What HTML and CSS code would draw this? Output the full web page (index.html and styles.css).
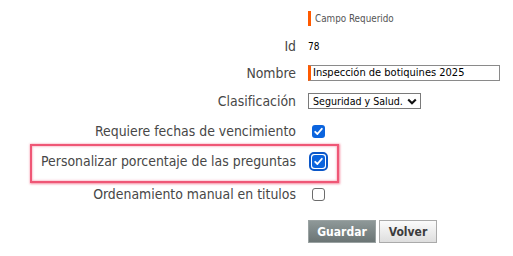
FILE: index.html
```html
<!DOCTYPE html>
<html lang="es">
<head>
<meta charset="utf-8">
<link rel="stylesheet" href="styles.css">
</head>
<body>
<div class="form">
  <div class="row r1">
    <div class="label"></div>
    <div class="value"><span class="required-note">Campo Requerido</span></div>
  </div>
  <div class="row r2">
    <div class="label">Id</div>
    <div class="value"><span class="id-val">78</span></div>
  </div>
  <div class="row r3">
    <div class="label">Nombre</div>
    <div class="value"><div class="text-input">Inspección de botiquines 2025</div></div>
  </div>
  <div class="row r4">
    <div class="label">Clasificación</div>
    <div class="value">
      <div class="select"><span>Seguridad y Salud.</span>
        <svg class="chev" width="10" height="7" viewBox="0 0 10 7"><path d="M1.2 1.4 L5 5.2 L8.8 1.4" fill="none" stroke="#111" stroke-width="2.1"/></svg>
      </div>
    </div>
  </div>
  <div class="row r5">
    <div class="label">Requiere fechas de vencimiento</div>
    <div class="value">
      <span class="check on"><svg width="13" height="13" viewBox="0 0 13 13"><path d="M3.2 6.8 L5.4 9 L9.8 3.8" fill="none" stroke="#fff" stroke-width="1.8" stroke-linecap="round" stroke-linejoin="round"/></svg></span>
    </div>
  </div>
  <div class="row r6 highlight">
    <div class="label">Personalizar porcentaje de las preguntas</div>
    <div class="value">
      <span class="focus-ring"><span class="check on"><svg width="13" height="13" viewBox="0 0 13 13"><path d="M3.2 6.8 L5.4 9 L9.8 3.8" fill="none" stroke="#fff" stroke-width="1.8" stroke-linecap="round" stroke-linejoin="round"/></svg></span></span>
    </div>
  </div>
  <div class="row r7">
    <div class="label">Ordenamiento manual en titulos</div>
    <div class="value"><span class="check off"></span></div>
  </div>
  <div class="buttons">
    <button class="btn primary">Guardar</button>
    <button class="btn secondary">Volver</button>
  </div>
</div>
</body>
</html>
```

FILE: styles.css
```css
html, body {
  margin: 0;
  padding: 0;
  background: #fff;
}
body {
  font-family: "DejaVu Sans Condensed", "DejaVu Sans", Verdana, sans-serif;
  color: #474747;
}
.form {
  padding-top: 4px;
}
.row {
  display: flex;
  align-items: center;
  gap: 12px;
}
.label {
  width: 296px;
  text-align: right;
  font-size: 13.9px;
  white-space: nowrap;
}
.value {
  display: flex;
  align-items: center;
}
.r1 { height: 28px; }
.r2 { height: 28px; }
.r3 { height: 26px; }
.r4 { height: 30px; }
.r5 { height: 30px; }
.r6 { height: 30px; }
.r7 { height: 36px; }

.required-note {
  border-left: 3px solid #ff5a00;
  padding-left: 4px;
  font-size: 9.8px;
  line-height: 15px;
  color: #555;
}
.id-val {
  font-size: 10px;
  color: #000;
}
.text-input {
  box-sizing: border-box;
  width: 192px;
  height: 16px;
  border: 1px solid #8a8a8a;
  border-left: 3px solid #ff5a00;
  padding-left: 2px;
  font-size: 11px;
  line-height: 14px;
  color: #000;
  white-space: nowrap;
}
.select {
  box-sizing: border-box;
  width: 113px;
  height: 16px;
  border: 1px solid #7a7a7a;
  padding: 0 3px 0 4px;
  font-size: 10.6px;
  line-height: 14px;
  color: #000;
  white-space: nowrap;
  display: flex;
  align-items: center;
  justify-content: space-between;
}
.chev { display: block; }

.check {
  box-sizing: border-box;
  width: 13px;
  height: 13px;
  border-radius: 3px;
  display: inline-flex;
  margin-left: 4px;
}
.check svg { display: block; }
.check.on {
  background: #0b64de;
}
.check.off {
  border: 1px solid #6c6c6c;
  background: #fff;
}
.focus-ring {
  display: inline-flex;
  padding: 1px;
  border: 2px solid #0b57c8;
  border-radius: 5px;
  margin-left: 1px;
}
.focus-ring .check { margin-left: 0; }

.highlight {
  position: relative;
}
.highlight::after {
  content: "";
  position: absolute;
  left: 30px;
  width: 309px;
  top: -2px;
  bottom: -7px;
  box-sizing: border-box;
  border: 2px solid rgba(236, 58, 94, 0.85);
  box-shadow: 0 0 2px 0.5px rgba(236, 58, 94, 0.6), inset 0 0 2px 0.5px rgba(236, 58, 94, 0.4);
  pointer-events: none;
}

.buttons {
  display: flex;
  gap: 3px;
  margin-top: 8px;
  padding-left: 308px;
}
.btn {
  box-sizing: border-box;
  height: 23px;
  font-family: inherit;
  font-weight: bold;
  font-size: 12px;
  padding: 0;
  border-radius: 0;
}
.btn.primary {
  width: 68px;
  color: #fff;
  background: linear-gradient(#8e9898, #6b7575);
  border: 1px solid #9aa2a2;
}
.btn.secondary {
  width: 58px;
  color: #3c3c3c;
  background: linear-gradient(#fbfbfb, #dedede);
  border: 1px solid #aaaaaa;
}
```
